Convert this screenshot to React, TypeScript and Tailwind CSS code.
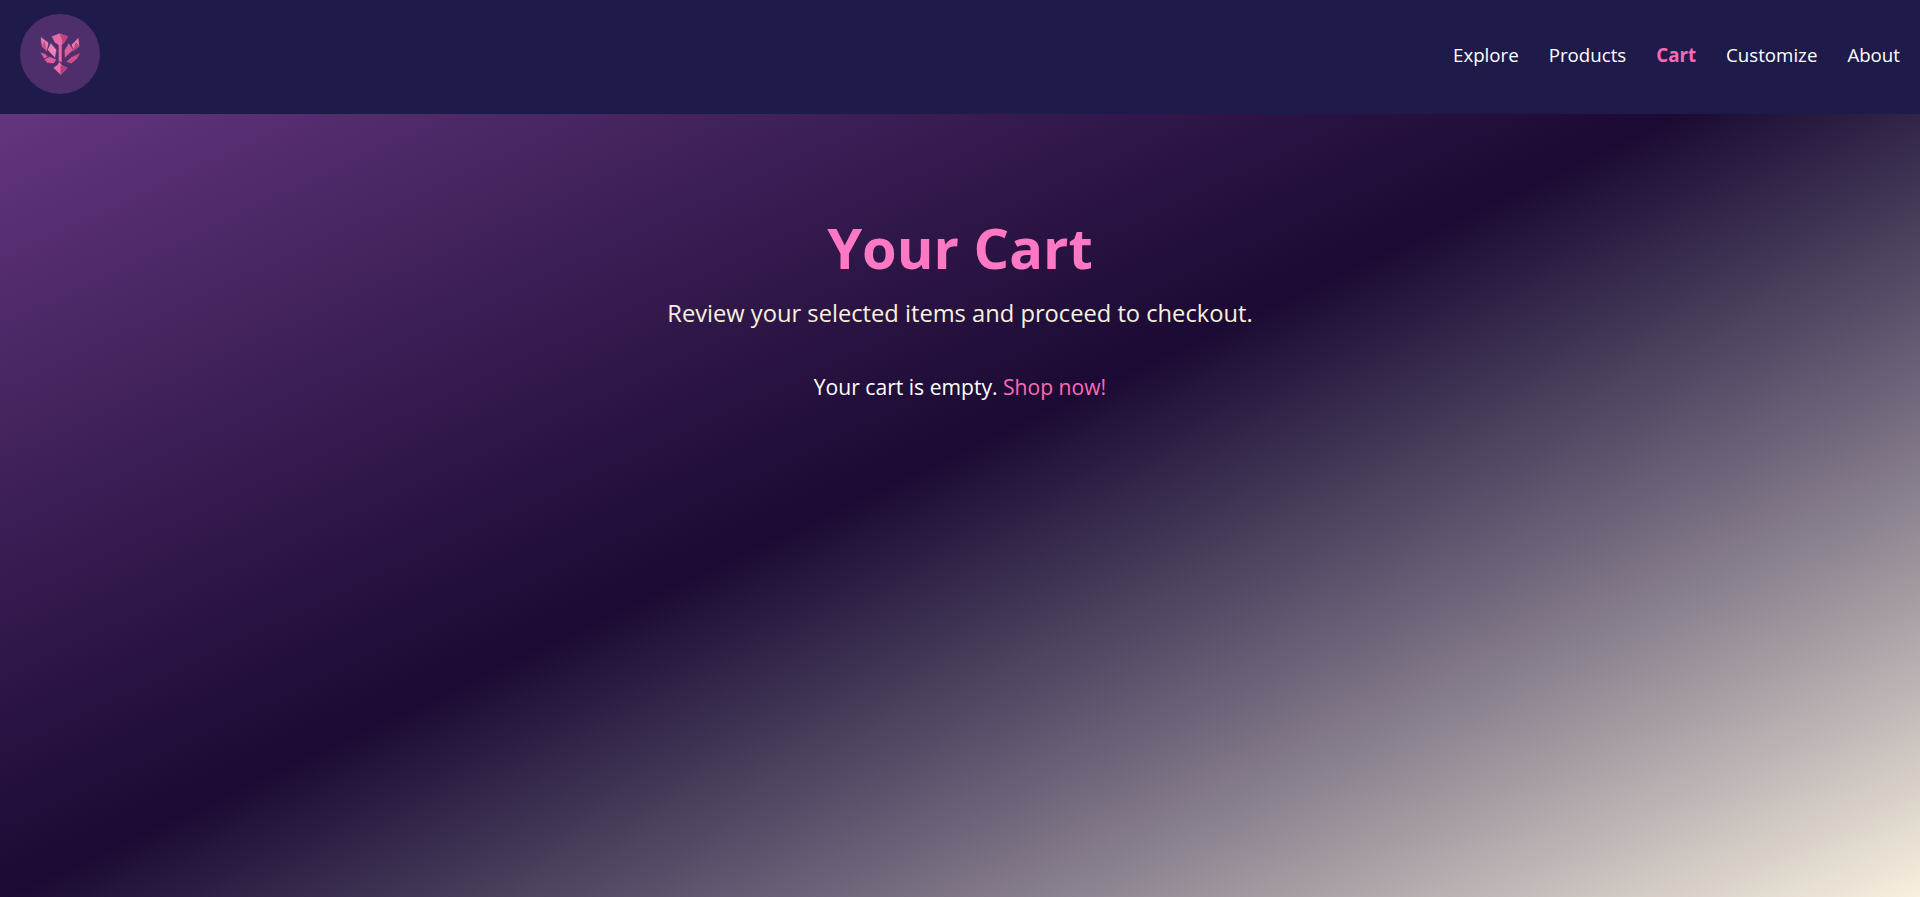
const Logo = () => (
  <svg viewBox="118 92 130 133" className="w-[43px] h-[44px]">
    <g fill="#e66aa6" stroke="#4e2f6c" strokeWidth="2.5" strokeLinejoin="round">
      <path d="M155 105 L180 95 L207 105 L195 125 L188 131 L188 184 L176 184 L176 131 L165 125 Z" />
      <path d="M122 105 L148 124 L143 152 L125 136 Z" fill="#e57db0" />
      <path d="M238 107 L241 135 L220 152 L216 130 Z" fill="#e57db0" />
      <path d="M153 124 L172 146 L167 172 L143 146 Z" fill="#ee82b6" />
      <path d="M208 124 L223 146 L195 172 L194 147 Z" fill="#d95c9c" />
      <path d="M120 152 L138 158 L148 170 L133 174 Z" fill="#d95c9c" />
      <path d="M133 174 L150 166 L172 174 L163 188 L142 186 Z" fill="#dd5c9c" />
      <path d="M245 153 L234 173 L216 188 L198 183 L216 167 Z" fill="#cf4f8c" />
      <path d="M180 180 L188 192 L206 200 L183 222 L160 200 L172 192 Z" fill="#ee6fad" />
    </g>
    <path d="M180 97 L205 105 L194 124 L188 129 L188 115 Z" fill="#c2417f" />
    <path d="M183 193 L204 200 L183 220 Z" fill="#b93c7a" />
    <path d="M135 118 L142 150 L126 135 Z" fill="#c94f8e" />
    <path d="M229 122 L240 135 L221 150 Z" fill="#c0437f" />
  </svg>
);

const links = ["Explore", "Products", "Cart", "Customize", "About"];

export default function App() {
  return (
    <div className="min-h-[897px] bg-gradient-to-br from-[#6f3c8a] via-[#1b0a33] to-[#f8f1df] font-['Open_Sans',sans-serif] text-white">
      <header className="h-[114px] bg-[#1e1b4b] flex items-start justify-between pl-5 pr-5 pt-[14px]">
        <div className="w-20 h-20 rounded-full bg-[#4e2f6c] flex items-center justify-center">
          <Logo />
        </div>
        <nav className="flex items-center gap-[30px] text-[18.7px] h-[82px]">
          {links.map((l) => (
            <a key={l} className={l === "Cart" ? "font-bold text-[#ff69b4]" : ""}>
              {l}
            </a>
          ))}
        </nav>
      </header>
      <main className="flex flex-col items-center pt-[99px]">
        <h1 className="text-[56px] leading-[68px] font-bold text-[#ff78c4]">Your Cart</h1>
        <p className="mt-[15px] text-[23.7px] text-[#f8f1df]">Review your selected items and proceed to checkout.</p>
        <p className="mt-[39px] text-[21.1px]">
          Your cart is empty. <a className="text-[#ff69b4]">Shop now!</a>
        </p>
      </main>
    </div>
  );
}
